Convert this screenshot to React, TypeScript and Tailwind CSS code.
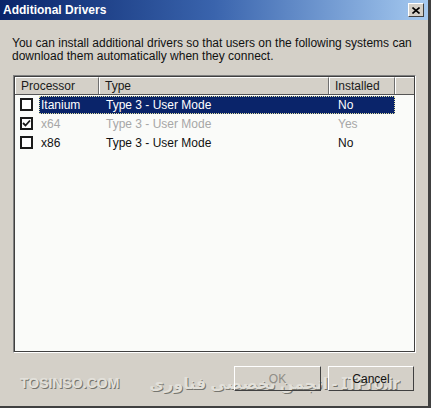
import React from 'react';

type Row = { proc: string; type: string; installed: string; checked: boolean; state: 'selected' | 'disabled' | 'normal' };

const rows: Row[] = [
  { proc: 'Itanium', type: 'Type 3 - User Mode', installed: 'No', checked: false, state: 'selected' },
  { proc: 'x64', type: 'Type 3 - User Mode', installed: 'Yes', checked: true, state: 'disabled' },
  { proc: 'x86', type: 'Type 3 - User Mode', installed: 'No', checked: false, state: 'normal' },
];

const CheckBox: React.FC<{ checked: boolean }> = ({ checked }) => (
  <div className="w-[13px] h-[13px] border-2 border-[#1a1a1a] bg-white flex items-center justify-center shrink-0">
    {checked && (
      <svg width="9" height="9" viewBox="0 0 9 9">
        <path d="M1 4 L3.5 6.5 L8 1.5" stroke="#1a1a1a" strokeWidth="1.8" fill="none" />
      </svg>
    )}
  </div>
);

const HeaderCell: React.FC<{ w: string; label?: string }> = ({ w, label }) => (
  <div className={`${w} h-full border-t border-l border-white border-r border-r-[#6f6f6f] bg-[#d4d0c8] flex items-center pl-[5px] text-[#1a1a1a]`}>
    {label}
  </div>
);

export default function App() {
  return (
    <div
      className="w-[431px] h-[408px] overflow-hidden bg-[#d4d0c8] border-r-[3px] border-b-[2px] border-[#404040] flex flex-col text-[12px] text-[#111]"
      style={{ fontFamily: '"Liberation Sans", Arial, sans-serif' }}
    >
      <div className="h-[20px] shrink-0 bg-gradient-to-r from-[#0a246a] via-[#3a64ad] to-[#a6caf0] flex items-center justify-between pl-[3px] pr-[4px]">
        <span className="text-white font-bold text-[12px]">Additional Drivers</span>
        <div className="w-[16px] h-[14px] bg-[#d4d0c8] border-t border-l border-white border-r border-b border-r-[#404040] border-b-[#404040] flex items-center justify-center">
          <svg width="8" height="7" viewBox="0 0 8 7">
            <path d="M0.5 0.5 L7.5 6.5 M7.5 0.5 L0.5 6.5" stroke="#000" strokeWidth="1.6" />
          </svg>
        </div>
      </div>

      <p className="mt-[17px] ml-[12px] leading-[13px] text-[12px] whitespace-nowrap">
        You can install additional drivers so that users on the following systems can
        <br />
        download them automatically when they connect.
      </p>

      <div className="mt-[12px] ml-[13px] w-[403px] h-[278px] shrink-0 border border-t-[#808080] border-l-[#808080] border-r-white border-b-white">
        <div className="w-full h-full border border-[#404040] bg-[#fafbf9] flex flex-col">
          <div className="h-[18px] flex shrink-0 border-b border-[#555]">
            <HeaderCell w="w-[84px]" label="Processor" />
            <HeaderCell w="w-[230px]" label="Type" />
            <HeaderCell w="w-[66px]" label="Installed" />
            <div className="flex-1 h-full bg-[#d4d0c8] border-t border-l border-white" />
          </div>
          {rows.map((r) => {
            const color = r.state === 'selected' ? 'text-white' : r.state === 'disabled' ? 'text-[#a7a7a7]' : 'text-[#111]';
            return (
              <div key={r.proc} className="h-[19px] flex items-center">
                <div className="w-[24px] pl-[5px] flex items-center">
                  <CheckBox checked={r.checked} />
                </div>
                <div
                  className={`w-[356px] h-[18px] flex items-center ${color} ${
                    r.state === 'selected' ? 'bg-[#0a246a] border border-dotted border-[#e0e0a0]' : 'border border-transparent'
                  }`}
                >
                  <span className="w-[66px] pl-[1px]">{r.proc}</span>
                  <span className="w-[230px]">{r.type}</span>
                  <span className="pl-[2px]">{r.installed}</span>
                </div>
              </div>
            );
          })}
        </div>
      </div>

      <div className="relative mt-[13px] flex justify-end gap-[7px] pr-[14px]">
        {/* watermark from the capture, sits under the buttons */}
        <div
          className="absolute left-[20px] right-[28px] top-[8px] flex items-center justify-between font-bold text-[#e2e0da] pointer-events-none leading-[18px]"
          style={{ textShadow: '1px 1px 0 #75746e' }}
        >
          <span className="text-[14px]">TOSINSO.COM</span>
          <span dir="rtl" className="text-[16px]" style={{ fontFamily: '"Noto Sans", "DejaVu Sans", sans-serif' }}>
            ITPro.ir - انجمن تخصصی فناوری
          </span>
        </div>
        <button className="relative w-[87px] h-[25px] bg-transparent border border-t-white border-l-white border-r-[#404040] border-b-[#404040] text-[#8f8d86]">
          OK
        </button>
        <button className="relative w-[86px] h-[25px] bg-transparent border border-t-white border-l-white border-r-[#404040] border-b-[#404040] text-[#111]">
          Cancel
        </button>
      </div>
    </div>
  );
}
